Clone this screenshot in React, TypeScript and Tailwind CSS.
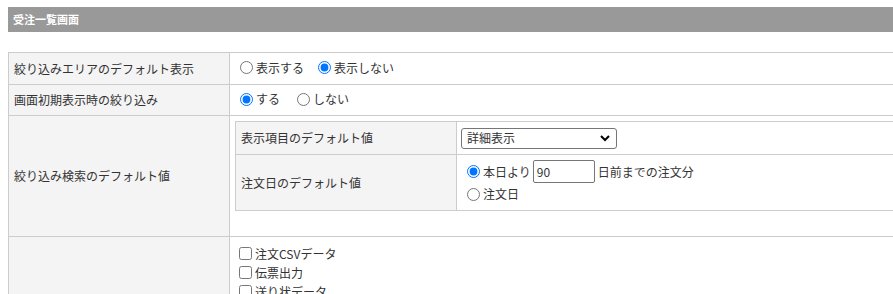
import type { ReactNode } from 'react';

function Radio({ label, checked, name, className = '' }: { label: string; checked?: boolean; name: string; className?: string }) {
  return (
    <label className={`inline-flex items-center ${className}`}>
      <input type="radio" name={name} defaultChecked={checked} className="m-0 mr-[3px] h-[13px] w-[13px]" />
      <span>{label}</span>
    </label>
  );
}

function Check({ label }: { label: string }) {
  return (
    <label className="flex h-[19px] items-center">
      <input type="checkbox" className="m-0 mr-[3px] h-[13px] w-[13px]" />
      <span>{label}</span>
    </label>
  );
}

function Label({ children }: { children: ReactNode }) {
  return <th className="w-[221px] border border-[#ccc] bg-[#f3f4f3] pl-[5px] text-left align-middle font-normal">{children}</th>;
}

export default function App() {
  return (
    <div className="h-[294px] w-[893px] overflow-hidden bg-white font-['Noto_Sans_CJK_JP',sans-serif] text-[12px] text-[#333]">
      <div className="ml-2 w-[1000px] pt-[7px]">
        <div className="h-[25px] bg-[#999] pl-[5px] text-[11px] font-bold leading-[25px] text-white">受注一覧画面</div>

        <table className="mt-5 w-full border-collapse">
          <tbody>
            <tr className="h-[32px]">
              <Label>絞り込みエリアのデフォルト表示</Label>
              <td className="border border-[#ccc] pl-[10px]">
                <Radio name="area" label="表示する" />
                <Radio name="area" label="表示しない" checked className="ml-[14px]" />
              </td>
            </tr>
            <tr className="h-[31px]">
              <Label>画面初期表示時の絞り込み</Label>
              <td className="border border-[#ccc] pl-[10px]">
                <Radio name="init" label="する" checked />
                <Radio name="init" label="しない" className="ml-[17px]" />
              </td>
            </tr>
            <tr className="h-[121px]">
              <Label>絞り込み検索のデフォルト値</Label>
              <td className="border border-[#ccc] px-[5px] pt-[5px] pb-[25px] align-top">
                <table className="w-full border-collapse">
                  <tbody>
                    <tr className="h-[33px]">
                      <Label>表示項目のデフォルト値</Label>
                      <td className="border border-[#ccc] pl-[4px]">
                        <div className="relative w-[156px]">
                          <select className="h-[21px] w-full appearance-none rounded-[3px] border border-[#767676] bg-white pl-[5px] text-[12px]">
                            <option>詳細表示</option>
                          </select>
                          <svg className="pointer-events-none absolute right-[7px] top-[7px]" width="10" height="7" viewBox="0 0 10 7" fill="none" stroke="#000" strokeWidth="2">
                            <path d="M1 1l4 4 4-4" />
                          </svg>
                        </div>
                      </td>
                    </tr>
                    <tr className="h-[56px]">
                      <Label>注文日のデフォルト値</Label>
                      <td className="border border-[#ccc] pl-[10px]">
                        <div className="flex items-center">
                          <Radio name="date" label="本日より" checked />
                          <input defaultValue="90" className="ml-[2px] h-[23px] w-[62px] rounded-[2px] border border-[#767676] pl-[3px] text-[12px]" />
                          <span className="ml-[3px]">日前までの注文分</span>
                        </div>
                        <div className="mt-[2px]">
                          <Radio name="date" label="注文日" />
                        </div>
                      </td>
                    </tr>
                  </tbody>
                </table>
              </td>
            </tr>
            <tr>
              <Label>{''}</Label>
              <td className="border border-[#ccc] pl-[9px] pt-[7px]">
                <Check label="注文CSVデータ" />
                <Check label="伝票出力" />
                <Check label="送り状データ" />
                <Check label="出荷データ" />
              </td>
            </tr>
          </tbody>
        </table>
      </div>
    </div>
  );
}
